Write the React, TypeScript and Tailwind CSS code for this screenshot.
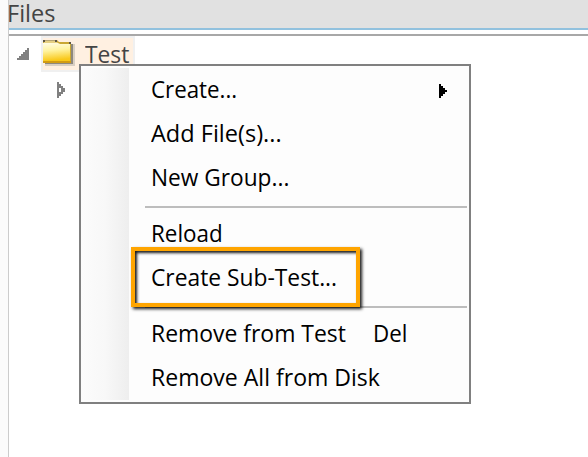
import type { ReactNode } from "react";

function Label({ children, className = "" }: { children: ReactNode; className?: string }) {
  return <span className={`inline-block origin-left whitespace-pre ${className}`}>{children}</span>;
}

function MenuItem({ label, fit, shortcut, submenu, highlighted }: {
  label: string;
  fit?: string;
  shortcut?: string;
  submenu?: boolean;
  highlighted?: boolean;
}) {
  return (
    <div className="relative flex h-11 items-start pl-[70px] text-2xl leading-[42px] text-black">
      <Label className={fit}>{label}</Label>
      {shortcut && <Label className="absolute left-[292px] scale-x-[0.93]">{shortcut}</Label>}
      {submenu && (
        <svg className="absolute top-[16px] left-[358px]" width="8" height="14" shapeRendering="crispEdges">
          <path d="M0 0H2V2H4V4H6V6H8V8H6V10H4V12H2V14H0Z" fill="#000" />
        </svg>
      )}
      {highlighted && (
        <div className="absolute top-[-9px] left-[50px] h-[60px] w-[229px] border-4 border-[#ffa500] shadow-[2px_2px_3px_rgba(0,0,0,0.9),inset_2px_2px_3px_rgba(0,0,0,0.9)]" />
      )}
    </div>
  );
}

function Separator() {
  return (
    <div className="h-3 pt-[6px] pr-[2px] pl-16">
      <div className="h-[2px] w-full bg-[#bdbdbd]" />
    </div>
  );
}

function ContextMenu() {
  return (
    <div className="absolute top-16 left-[79px] h-[340px] w-[392px] border-2 border-[#808080] bg-[#fdfdfd] py-[2px]">
      <div className="absolute top-[2px] bottom-[2px] left-0 w-12 bg-linear-to-r from-[#fcfcfc] via-[#f8f8f8] to-[#eeeeee]" />
      <MenuItem label="Create..." submenu fit="scale-x-[0.93]" />
      <MenuItem label="Add File(s)..." fit="scale-x-[0.98]" />
      <MenuItem label="New Group..." fit="scale-x-[0.945]" />
      <Separator />
      <MenuItem label="Reload" fit="scale-x-[0.935]" />
      <div className="relative z-10">
        <MenuItem label="Create Sub-Test..." highlighted fit="scale-x-[0.95]" />
      </div>
      <Separator />
      <MenuItem label="Remove from Test" shortcut="Del" fit="scale-x-[0.955]" />
      <MenuItem label="Remove All from Disk" fit="scale-x-[0.96]" />
    </div>
  );
}

function FolderIcon() {
  return (
    <svg className="mt-[2px] shrink-0" width="34" height="28" viewBox="0 0 34 28">
      <defs>
        <linearGradient id="folder" x1="0" y1="0" x2="0.15" y2="1">
          <stop offset="0" stopColor="#fffde8" />
          <stop offset="0.45" stopColor="#fff3a0" />
          <stop offset="1" stopColor="#f9c819" />
        </linearGradient>
      </defs>
      <path d="M2 4H32V26H2Z" fill="#d9cfc3" />
      <path d="M2 4H30V24H2Z" fill="#8e887d" />
      <path d="M0 0H14L16 2H28V23H0Z" fill="#c9a734" />
      <path d="M1 1H13L15 3H1Z" fill="#e5d083" />
      <path d="M0 3H15L17 4H27V21H0Z" fill="url(#folder)" />
      <path d="M0 21H28V23H0Z" fill="#d29c13" />
      <path d="M0 0H2V2H0ZM12 0H14V2H12ZM26 2H28V4H26Z" fill="#5d5544" />
      <path d="M2 0H12V1H2Z" fill="#b7a675" />
    </svg>
  );
}

export default function App() {
  return (
    <div className="relative flex h-[457px] w-[588px] overflow-hidden bg-[#fbfbfb] font-['Open_Sans','Noto_Sans',sans-serif]">
      <div className="ml-2 flex w-[580px] flex-col border-l border-[#cccccc] bg-white">
        <header className="flex h-[30px] items-start border-b-2 border-[#91c1de] bg-[#e1e1e1] text-2xl leading-[26px] text-[#444444]">
          <Label className="-ml-[2px] scale-x-[0.98]">Files</Label>
        </header>
        <div className="mt-1 h-[2px] bg-[#a8a8a8]" />
        <div className="flex h-9 items-center">
          <svg className="ml-2 shrink-0" width="12" height="12" shapeRendering="crispEdges">
            <path d="M12 0V12H0V10H2V8H4V6H6V4H8V2H10V0Z" fill="#808080" />
          </svg>
          <div className="ml-3 flex h-9 w-[94px] items-start border-2 border-[#f0f0f0] bg-[#fff0e1] text-2xl leading-[31px] text-[#444444]">
            <FolderIcon />
            <Label className="ml-[8px] scale-x-[0.95]">Test</Label>
          </div>
        </div>
        <svg className="mt-[10px] ml-12" width="8" height="16" shapeRendering="crispEdges">
          <path fillRule="evenodd" d="M0 0H2V2H4V4H6V6H8V10H6V12H4V14H2V16H0ZM2 6V10H4V6Z" fill="#808080" />
        </svg>
      </div>
      <ContextMenu />
    </div>
  );
}
